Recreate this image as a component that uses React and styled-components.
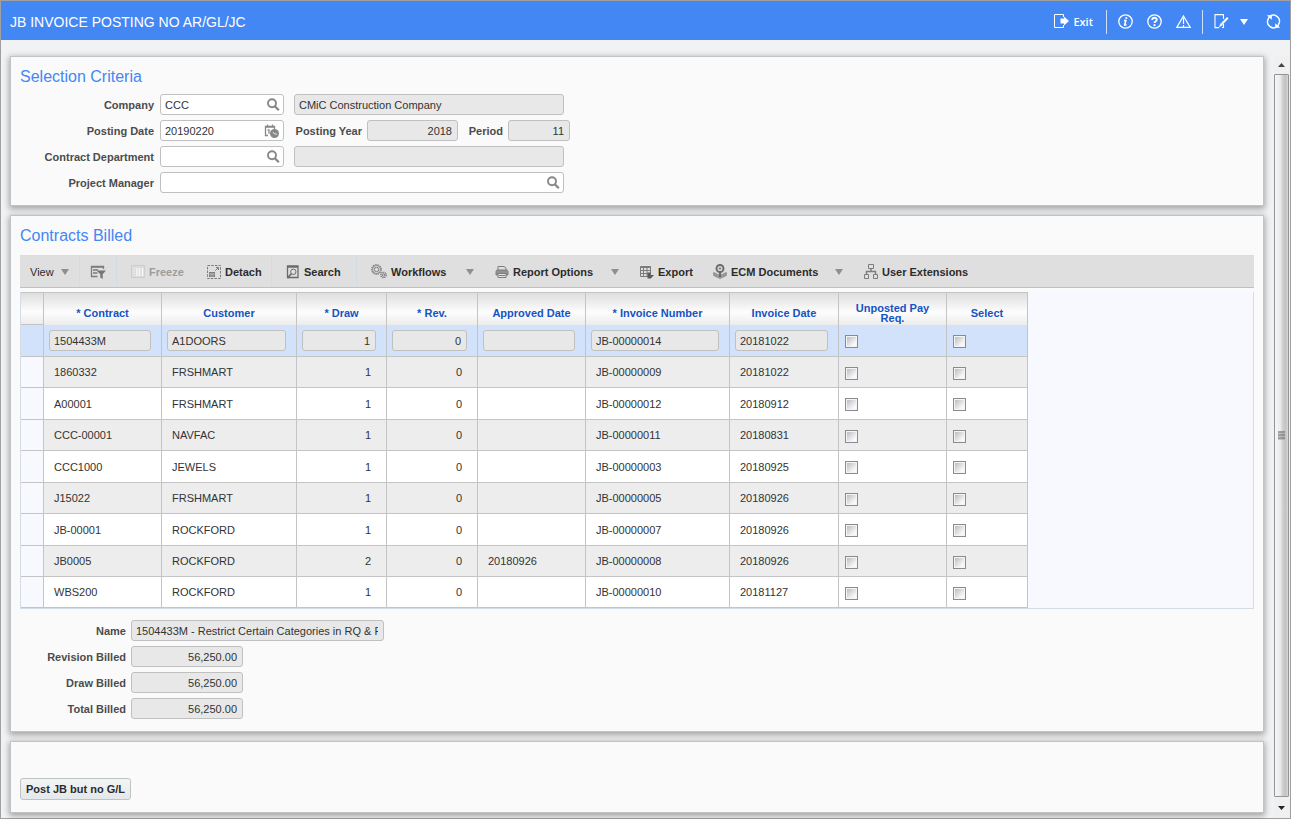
import React from 'react';
import styled, { createGlobalStyle, css } from 'styled-components';

const GlobalStyle = createGlobalStyle`
  *, *::before, *::after { box-sizing: border-box; }
  body {
    margin: 0;
    background: #f0f2f4;
    color: #333;
    font-family: "Liberation Sans", Arial, sans-serif;
    font-size: 11px;
    line-height: 14px;
  }
  input, button { font: inherit; color: inherit; }
  button { background: none; border: 0; padding: 0; cursor: pointer; }
  svg { display: block; flex: none; }
`;

const Page = styled.div`
  min-height: 100vh;
  display: flex;
  flex-direction: column;
  border: 1px solid #a0a0a0;
  background: #f0f2f4;
`;

const TopBar = styled.header`
  height: 39px;
  display: flex;
  align-items: center;
  justify-content: space-between;
  padding: 2px 9px 0;
  background: #4387f4;
  color: #fff;
`;

const Title = styled.h1`
  margin: 0;
  font-size: 14px;
  font-weight: normal;
  line-height: 18px;
`;

const TopActions = styled.nav`
  display: flex;
  align-items: center;
`;

const ActionGroup = styled.div`
  display: flex;
  align-items: center;
  gap: ${(p) => p.$gap || 14}px;
  & + & {
    margin-left: 11px;
    padding-left: 11px;
    border-left: 1px solid #cfe0fc;
    height: 24px;
  }
`;

const TopButton = styled.button`
  display: flex;
  align-items: center;
  gap: 4px;
`;

const ExitButton = styled(TopButton)`
  margin-right: 2px;
  font-family: "Open Sans", sans-serif;
  font-weight: 600;
`;

const RefreshButton = styled(TopButton)`
  margin-left: 7px;
`;

const Body = styled.div`
  flex: 1;
  display: flex;
  padding-top: 16px;
`;

const Content = styled.main`
  flex: 1;
  min-width: 0;
  display: flex;
  flex-direction: column;
  gap: 9px;
  padding: 0 10px 5px 9px;
`;

const Panel = styled.section`
  padding: 9px 9px 12px;
  border: 1px solid #c3c3c3;
  background: #fafafa;
  box-shadow: 0 2px 6px 1px rgba(0, 0, 0, 0.32);
`;

const ActionPanel = styled(Panel)`
  padding-top: 36px;
`;

const PanelTitle = styled.h2`
  margin: 0;
  height: ${(p) => p.$height}px;
  color: #4387f4;
  font-size: 16px;
  font-weight: normal;
  line-height: 22px;
`;

const Form = styled.form`
  display: flex;
  flex-direction: column;
  gap: 5px;
`;

const SummaryForm = styled(Form)`
  margin-top: 11px;
`;

const FormRow = styled.div`
  display: flex;
  gap: 10px;
`;

const Pair = styled.div`
  display: flex;
  align-items: center;
  gap: ${(p) => p.$gap || 6}px;
`;

const Label = styled.label`
  width: ${(p) => p.$width}px;
  color: #4c4c4c;
  font-weight: bold;
  text-align: right;
  white-space: nowrap;
`;

const frame = css`
  height: 21px;
  border: 1px solid #c0c0c0;
  border-radius: 3px;
`;

const ReadOnly = styled.input.attrs({ type: 'text', readOnly: true })`
  ${frame}
  display: block;
  width: ${(p) => (p.$width ? `${p.$width}px` : '100%')};
  padding: 0 5px 0 4px;
  background: #e8e8e8;
  text-align: ${(p) => (p.$right ? 'right' : 'left')};
  outline: 0;
`;

const LookupBox = styled.div`
  ${frame}
  display: flex;
  align-items: center;
  width: ${(p) => p.$width}px;
  padding-right: 3px;
  background: #fff;
`;

const LookupInput = styled.input`
  flex: 1;
  min-width: 0;
  height: 19px;
  padding: 0 4px;
  border: 0;
  background: transparent;
  outline: 0;
`;

const Toolbar = styled.div`
  display: flex;
  height: 33px;
  margin-bottom: 4px;
  border-top: 1px solid #cfdff6;
  border-bottom: 1px solid #c0c0c0;
  background: #dfdfdf;
`;

const ToolButton = styled.button`
  display: flex;
  align-items: center;
  gap: 4px;
  width: ${(p) => p.$width}px;
  padding: 0 7px 0 ${(p) => (p.$tight ? 10 : 14)}px;
  border-right: ${(p) => (p.$divided ? '1px solid #d3dce6' : '0')};
  color: #2c2c2c;
  font-weight: ${(p) => (p.$plain ? 'normal' : 'bold')};
  white-space: nowrap;
  &:disabled { color: #9c9c9c; cursor: default; }
`;

const Caret = styled.i`
  margin-left: auto;
  margin-right: ${(p) => p.$inset || 0}px;
  border: 4px solid transparent;
  border-top: 6px solid ${(p) => p.$color || '#8b9096'};
  border-bottom: 0;
`;

const GridFrame = styled.div`
  border: 1px solid #d3dde7;
  border-top: 0;
  background: #f8f9fe;
  overflow-x: auto;
`;

const Grid = styled.table`
  width: 1007px;
  table-layout: fixed;
  border-collapse: separate;
  border-spacing: 0;
`;

const HeadCell = styled.th`
  height: 33px;
  padding: 8px 10px 0;
  border-top: 1px solid #c4c4c4;
  border-right: 1px solid #c4c4c4;
  background: linear-gradient(#dedede, #fdfdfd 60%, #ececec);
  color: #1453c4;
  line-height: 10px;
  &:first-child { border-bottom: 1px solid #c4c4c4; }
`;

const Cell = styled.td`
  padding: ${(p) => (p.$field ? '0 10px 0 5px' : '0 15px 0 10px')};
  border-right: 1px solid #c4c4c4;
  border-bottom: 1px solid #c4c4c4;
  text-align: ${(p) => (p.$right ? 'right' : 'left')};
`;

const TickCell = styled(Cell)`
  padding: 2px 0 0 6px;
`;

const Row = styled.tr`
  height: 31px;
  background: #fff;
  &:nth-child(odd) { height: 32px; }
  &:nth-child(even) { background: #ededed; }
  &:last-child { height: 31px; }
  & > td:first-child { background: #f8f9fe; }
  &[aria-selected='true'], &[aria-selected='true'] > td:first-child { background: #d3e2fb; }
`;

const Tick = styled.input.attrs({ type: 'checkbox' })`
  appearance: none;
  display: block;
  width: 13px;
  height: 13px;
  margin: 0;
  padding: 1px;
  border: 1px solid #8b8b8b;
  background: linear-gradient(135deg, #b9bdc4, #f8f8f8 80%) content-box, #f4f4f4;
  &:checked { background: #4387f4 content-box; }
`;

const PostButton = styled.button`
  height: 22px;
  padding: 0 4px;
  border: 1px solid #c0c2c4;
  border-radius: 3px;
  background: linear-gradient(#f3f5f6, #e3e8eb);
  color: #2c2c2c;
  font-weight: bold;
  min-width: 111px;
  white-space: nowrap;
`;

const ScrollTrack = styled.div`
  display: flex;
  flex-direction: column;
  width: 16px;
  padding-right: 1px;
  background: #f0f0f0;
`;

const ScrollButton = styled.button`
  display: grid;
  place-items: center;
  height: ${(p) => p.$height}px;
`;

const ScrollThumb = styled.div`
  flex: 1;
  display: grid;
  place-items: center;
  border: 1px solid #959595;
  border-radius: 1px;
  background: linear-gradient(90deg, #f6f6f6, #ececec 40%, #cfcfd2 60%, #c2c2c6 85%, #dcdcdc);
`;

function Icon({ w = 15, h = 15, children, color = 'currentColor', sw = 1 }) {
  return (
    <svg width={w} height={h} viewBox={`0 0 ${w} ${h}`} fill="none" stroke={color} strokeWidth={sw} aria-hidden="true">
      {children}
    </svg>
  );
}

const GREY = '#7d7d7d';

const ExitIcon = () => (
  <Icon>
    <path d="M9.500 3V.5h-9v13h9V11" />
    <path d="M6.500 4.500h3.500V2.500l5 4.500-5 4.500V9.500H6.500z" fill="currentColor" stroke="none" />
  </Icon>
);
const InfoIcon = () => (
  <Icon sw={1.3}>
    <circle cx="7.500" cy="7.500" r="6.700" />
    <path d="M6 6.500h1.800L6.700 11h1.800" strokeWidth="1.600" />
    <circle cx="8.300" cy="4" r="1.100" fill="currentColor" stroke="none" />
  </Icon>
);
const HelpIcon = () => (
  <Icon sw={1.3}>
    <circle cx="7.500" cy="7.500" r="6.700" />
    <path d="M5.200 6c0-3 4.600-2.900 4.600-.2C9.800 7.400 7.500 7.200 7.500 9" strokeWidth="1.800" />
    <circle cx="7.500" cy="11.200" r="1.100" fill="currentColor" stroke="none" />
  </Icon>
);
const WarnIcon = () => (
  <Icon sw={1.2}>
    <path d="M7.500 2L14.200 13.400H.8z" />
    <path d="M7.500 4v6M7.500 11v2" />
  </Icon>
);
const EditIcon = () => (
  <Icon sw={1.1}>
    <path d="M9.500 5V.6H1v13h4M9.500 10v3.500H8" />
    <path d="M13.800 3.700L7.800 10" strokeWidth="2" />
    <path d="M6.800 9l2 2-4 2.500z" fill="currentColor" stroke="none" />
  </Icon>
);
const RefreshIcon = () => (
  <Icon sw={1.4}>
    <path d="M3.500 2.700A6 6 0 0 1 13 9.500M11.500 12.300A6 6 0 0 1 2 5.500" />
    <path d="M2 6a6 6 0 0 1 1.500-3.300M13 9a6 6 0 0 1-1.500 3.300" />
    <path d="M.8 1.200h5v4.500zM14.200 13.800h-5V9.300z" fill="currentColor" stroke="none" />
  </Icon>
);
const LensIcon = () => (
  <Icon w={14} h={14} color="#85888a">
    <circle cx="6" cy="5.300" r="4" strokeWidth="1.900" />
    <path d="M8.800 8.300l4 4" strokeWidth="2.300" />
  </Icon>
);
const DateIcon = () => (
  <Icon w={16} h={14} color="#85888a">
    <path d="M4 11.500H1.500V2.500h9V5M3.500.5v3M8.500.5v3M1 3h10" strokeWidth="1.300" />
    <path d="M3.500 5.800h1.500v4" strokeWidth="1.300" />
    <circle cx="10.500" cy="9.500" r="4.500" fill="#85888a" stroke="none" />
    <path d="M9 8l1.500 2h2.500" stroke="#e8e8e8" />
  </Icon>
);
const FilterIcon = () => (
  <Icon w={16} h={14} color={GREY}>
    <path d="M7.500 11.500H1.500v-10h12V4" strokeWidth="1.300" />
    <path d="M1 2h13M3 5h5M3 8h4.500" strokeWidth="1.600" />
    <path d="M6.500 5.500H16L12.700 9.300V14l-2.400-1.400V9.300z" fill="#757575" stroke="none" />
  </Icon>
);
const FreezeIcon = () => (
  <Icon w={14} h={14} color="#cdcdcd">
    <path d="M.5.500h13v12H.5z" fill="#dcdcdc" />
    <path d="M6 3v8M8.500 3v8M11.500 3v8" stroke="#f9f9f9" strokeWidth="1.300" />
    <path d="M3 3v8" strokeDasharray="1 1.500" stroke="#f9f9f9" />
  </Icon>
);
const DetachIcon = () => (
  <Icon w={14} h={14} color={GREY}>
    <path d="M.5.5h13v13H.5z" strokeDasharray="2.500 1.200" />
    <path d="M2 7h6v5H2z" fill={GREY} stroke="none" />
    <path d="M2 9h6M4 8v4M6 8v4" stroke="#dfdfdf" strokeWidth=".5" />
    <path d="M8.300 5.700l3-3M9 2.500h2.500V5" />
  </Icon>
);
const SearchIcon = () => (
  <Icon w={14} h={14} color="#6a6a6a">
    <path d="M1.500 1h10.500v11.500H1.500zM1.500 2h10" strokeWidth="1.300" />
    <circle cx="7.300" cy="6.800" r="2.700" />
    <path d="M5.300 8.800L1.500 13" strokeWidth="1.700" />
  </Icon>
);
const GearsIcon = () => (
  <Icon w={16} h={15} color={GREY}>
    <circle cx="5.500" cy="5.500" r="4.800" strokeDasharray="1.600 .7" strokeWidth="1.100" />
    <circle cx="5.500" cy="5.500" r="4" strokeWidth=".8" />
    <circle cx="5.500" cy="5.500" r="2.200" />
    <circle cx="12.500" cy="11" r="2.700" strokeDasharray="1.400 .6" strokeWidth="1.300" />
    <circle cx="12.500" cy="11" r="1.200" />
  </Icon>
);
const PrintIcon = () => (
  <Icon w={14} h={14} color={GREY}>
    <path d="M3 5V1.500h6L11 3v2" />
    <path d="M1 6.500Q1 5 2.500 5h9Q13 5 13 6.500V10H1z" fill="#929292" />
    <path d="M3 8.500h8v4H3z" fill="#e6e6e6" />
    <path d="M4 10.500h6" />
  </Icon>
);
const ExportIcon = () => (
  <Icon w={14} h={14} color={GREY}>
    <path d="M.5 1.500h10v10H.5z" />
    <path d="M.5 2h10" strokeWidth="2" />
    <path d="M3.500 2v9.500M7 2v9.500M.5 5.500h10M.5 8.500h10" />
    <path d="M7.500 7.500h3V10H14l-3.200 3.500H7.500z" fill="#5c5c5c" stroke="none" />
  </Icon>
);
const EcmIcon = () => (
  <Icon w={14} h={15} color={GREY}>
    <path d="M.7 8.500L7 11.500l6.300-3v3L7 14.500l-6.300-3z" fill="#b4b4b4" strokeWidth=".8" />
    <path d="M1 10.200l6 3 6-3" strokeWidth=".8" />
    <circle cx="7" cy="4.500" r="3.500" strokeWidth="1.900" stroke="#6a6a6a" />
    <path d="M7 7.500V13" strokeWidth="2" stroke="#6a6a6a" />
    <circle cx="7" cy="4.500" r=".8" fill={GREY} />
  </Icon>
);
const TreeIcon = () => (
  <Icon w={14} h={15} color={GREY}>
    <path d="M4.500.5h5v4h-5zM.5 10.500h4v4h-4zM9.500 10.500h4v4h-4z" />
    <path d="M7 4.500v3M2.500 10.500v-3h9v3" strokeWidth="1.400" />
  </Icon>
);

function Lookup({ id, label, width, value = '', date }) {
  return (
    <Pair>
      <Label $width={134} htmlFor={id}>{label}</Label>
      <LookupBox $width={width}>
        <LookupInput id={id} type="text" defaultValue={value} />
        <button type="button" aria-label={`Look up ${label}`}>{date ? <DateIcon /> : <LensIcon />}</button>
      </LookupBox>
    </Pair>
  );
}

function Value({ id, label, labelWidth, width, value, right, gap }) {
  return (
    <Pair $gap={gap}>
      <Label $width={labelWidth} htmlFor={id}>{label}</Label>
      <ReadOnly id={id} $width={width} $right={right} defaultValue={value} />
    </Pair>
  );
}

const tools = [
  { text: 'View', width: 60, tight: true, plain: true, divided: true, menu: true },
  { name: 'Query by example', icon: <FilterIcon />, width: 37, tight: true, divided: true },
  { text: 'Freeze', icon: <FreezeIcon />, width: 76, disabled: true },
  { text: 'Detach', icon: <DetachIcon />, width: 79, divided: true },
  { text: 'Search', icon: <SearchIcon />, width: 85, divided: true },
  { text: 'Workflows', icon: <GearsIcon />, width: 124, menu: true },
  { text: 'Report Options', icon: <PrintIcon />, width: 145, menu: true },
  { text: 'Export', icon: <ExportIcon />, width: 73 },
  { text: 'ECM Documents', icon: <EcmIcon />, width: 151, menu: true },
  { text: 'User Extensions', icon: <TreeIcon />, width: 130 },
];

const columns = [
  { title: '* Contract', width: 118 },
  { title: 'Customer', width: 135 },
  { title: '* Draw', width: 90, right: true },
  { title: '* Rev.', width: 91, right: true },
  { title: 'Approved Date', width: 108 },
  { title: '* Invoice Number', width: 144 },
  { title: 'Invoice Date', width: 109 },
];

const rows = [
  ['1504433M', 'A1DOORS', '1', '0', '', 'JB-00000014', '20181022'],
  ['1860332', 'FRSHMART', '1', '0', '', 'JB-00000009', '20181022'],
  ['A00001', 'FRSHMART', '1', '0', '', 'JB-00000012', '20180912'],
  ['CCC-00001', 'NAVFAC', '1', '0', '', 'JB-00000011', '20180831'],
  ['CCC1000', 'JEWELS', '1', '0', '', 'JB-00000003', '20180925'],
  ['J15022', 'FRSHMART', '1', '0', '', 'JB-00000005', '20180926'],
  ['JB-00001', 'ROCKFORD', '1', '0', '', 'JB-00000007', '20180926'],
  ['JB0005', 'ROCKFORD', '2', '0', '20180926', 'JB-00000008', '20180926'],
  ['WBS200', 'ROCKFORD', '1', '0', '', 'JB-00000010', '20181127'],
];

function ContractsGrid() {
  return (
    <GridFrame>
      <Grid>
        <colgroup>
          <col width="23" />
          {columns.map((c) => <col key={c.title} width={c.width} />)}
          <col width="108" />
          <col width="81" />
        </colgroup>
        <thead>
          <tr>
            <HeadCell />
            {columns.map((c) => <HeadCell key={c.title} scope="col">{c.title}</HeadCell>)}
            <HeadCell scope="col">Unposted Pay Req.</HeadCell>
            <HeadCell scope="col">Select</HeadCell>
          </tr>
        </thead>
        <tbody>
          {rows.map((row, r) => (
            <Row key={row[0]} aria-selected={r === 0}>
              <Cell />
              {row.map((value, c) => (
                <Cell key={columns[c].title} $right={columns[c].right} $field={r === 0}>
                  {r === 0
                    ? <ReadOnly aria-label={columns[c].title} $right={columns[c].right} defaultValue={value} />
                    : value}
                </Cell>
              ))}
              <TickCell><Tick aria-label={`Unposted pay request ${row[0]}`} /></TickCell>
              <TickCell><Tick aria-label={`Select ${row[0]}`} /></TickCell>
            </Row>
          ))}
        </tbody>
      </Grid>
    </GridFrame>
  );
}

export default function App() {
  return (
    <Page>
      <GlobalStyle />
      <TopBar>
        <Title>JB INVOICE POSTING NO AR/GL/JC</Title>
        <TopActions>
          <ActionGroup>
            <ExitButton><ExitIcon />Exit</ExitButton>
          </ActionGroup>
          <ActionGroup>
            <TopButton aria-label="Information"><InfoIcon /></TopButton>
            <TopButton aria-label="Help"><HelpIcon /></TopButton>
            <TopButton aria-label="Warnings"><WarnIcon /></TopButton>
          </ActionGroup>
          <ActionGroup $gap={11}>
            <TopButton aria-label="Edit"><EditIcon /></TopButton>
            <TopButton aria-label="More"><Caret $color="#fff" /></TopButton>
            <RefreshButton aria-label="Refresh"><RefreshIcon /></RefreshButton>
          </ActionGroup>
        </TopActions>
      </TopBar>
      <Body>
        <Content>
          <Panel>
            <PanelTitle $height={28}>Selection Criteria</PanelTitle>
            <Form>
              <FormRow>
                <Lookup id="company" label="Company" width={124} value="CCC" />
                <ReadOnly aria-label="Company name" $width={270} defaultValue="CMiC Construction Company" />
              </FormRow>
              <FormRow>
                <Lookup id="posting-date" label="Posting Date" width={124} value="20190220" date />
                <Value id="year" label="Posting Year" labelWidth={68} gap={5} width={91} value="2018" right />
                <Value id="period" label="Period" labelWidth={35} gap={5} width={62} value="11" right />
              </FormRow>
              <FormRow>
                <Lookup id="department" label="Contract Department" width={124} />
                <ReadOnly aria-label="Department name" $width={270} />
              </FormRow>
              <FormRow>
                <Lookup id="manager" label="Project Manager" width={404} />
              </FormRow>
            </Form>
          </Panel>
          <Panel>
            <PanelTitle $height={30}>Contracts Billed</PanelTitle>
            <Toolbar role="toolbar">
              {tools.map((t) => (
                <ToolButton
                  key={t.text || t.name}
                  aria-label={t.name}
                  disabled={t.disabled}
                  $width={t.width}
                  $tight={t.tight}
                  $plain={t.plain}
                  $divided={t.divided}
                >
                  {t.icon}
                  {t.text}
                  {t.menu && <Caret $inset={t.divided ? 3 : 0} />}
                </ToolButton>
              ))}
            </Toolbar>
            <ContractsGrid />
            <SummaryForm>
              <Value id="name" label="Name" labelWidth={106} gap={5} width={253} value="1504433M - Restrict Certain Categories in RQ & PO" />
              <Value id="revision" label="Revision Billed" labelWidth={106} gap={5} width={112} value="56,250.00" right />
              <Value id="draw" label="Draw Billed" labelWidth={106} gap={5} width={112} value="56,250.00" right />
              <Value id="total" label="Total Billed" labelWidth={106} gap={5} width={112} value="56,250.00" right />
            </SummaryForm>
          </Panel>
          <ActionPanel>
            <PostButton>Post JB but no G/L</PostButton>
          </ActionPanel>
        </Content>
        <ScrollTrack>
          <ScrollButton $height={18} aria-label="Scroll up">
            <svg width="7" height="4" viewBox="0 0 7 4"><path d="M3.500 0L7 4H0z" fill="#444" /></svg>
          </ScrollButton>
          <ScrollThumb>
            <svg width="8" height="9" viewBox="0 0 8 9">
              <path d="M0 1h7M0 4h7M0 7h7" stroke="#555" strokeWidth="1" />
              <path d="M0 2h7M0 5h7M0 8h7" stroke="#999" strokeWidth="1" />
            </svg>
          </ScrollThumb>
          <ScrollButton $height={21} aria-label="Scroll down">
            <svg width="7" height="4" viewBox="0 0 7 4"><path d="M3.500 4L7 0H0z" fill="#222" /></svg>
          </ScrollButton>
        </ScrollTrack>
      </Body>
    </Page>
  );
}
